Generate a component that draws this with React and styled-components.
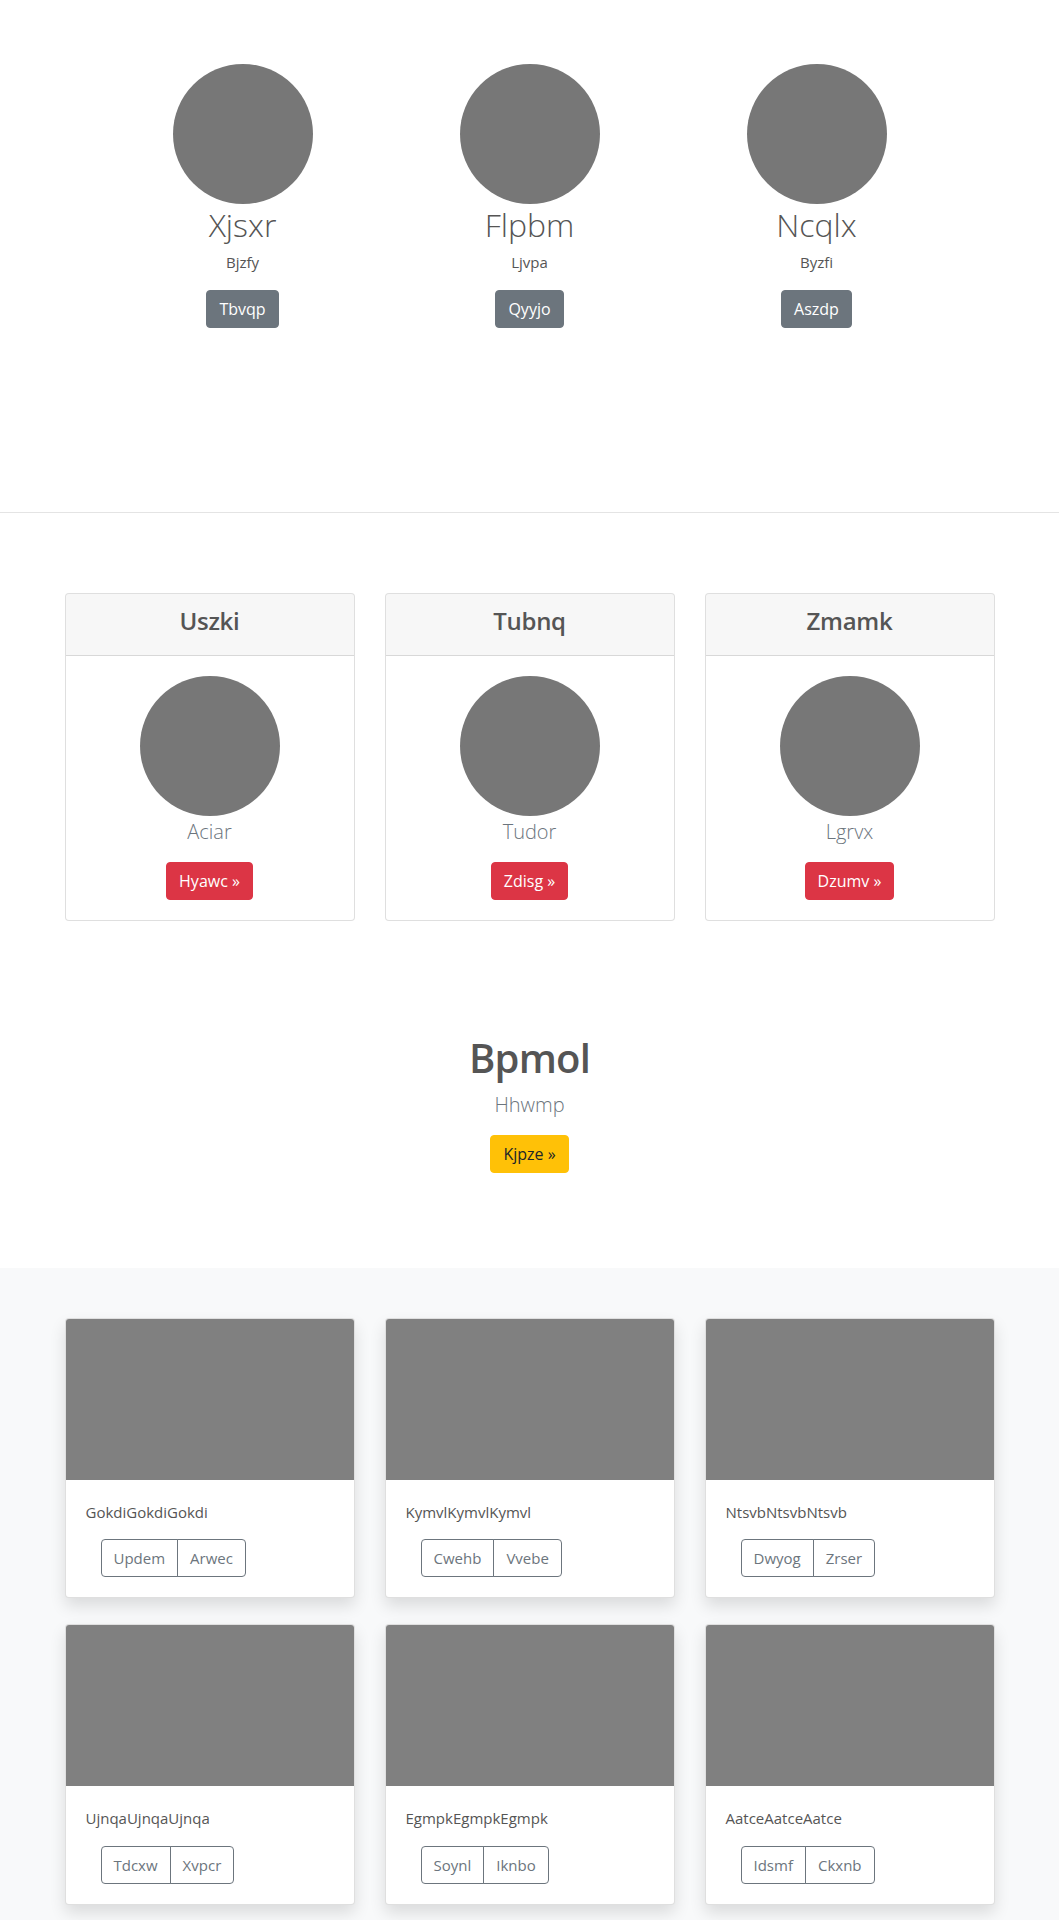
import React from "react";
import styled, { createGlobalStyle, css } from "styled-components";

const GlobalStyle = createGlobalStyle`
  *, *::before, *::after { box-sizing: border-box; }
  body {
    margin: 0;
    font-family: "Open Sans", "Noto Sans", sans-serif;
    color: #555;
    background: #fff;
  }
`;

const Page = styled.div`
  width: 100%;
`;

const Container = styled.div`
  max-width: 960px;
  margin: 0 auto;
  padding: 0 15px;
`;

/* ---------- Hero profiles ---------- */
const HeroSection = styled.section`
  padding: 64px 0 184px;
`;

const ProfileRow = styled.div`
  display: grid;
  grid-template-columns: repeat(3, 287px);
  justify-content: center;
`;

const ProfileCol = styled.div`
  display: flex;
  flex-direction: column;
  align-items: center;
  text-align: center;
`;

const Avatar = styled.div`
  width: 140px;
  height: 140px;
  border-radius: 50%;
  background: #777;
  flex-shrink: 0;
`;

const ProfileName = styled.h3`
  margin: 2px 0 0;
  font-size: 32px;
  font-weight: 300;
  line-height: 1.2;
  color: #555;
`;

const ProfileRole = styled.p`
  margin: 7px 0 16px;
  font-size: 15px;
  line-height: 1.5;
  color: #555;
`;

const variants = {
  secondary: css`
    background: #6c757d;
    border-color: #6c757d;
    color: #fff;
  `,
  danger: css`
    background: #dc3545;
    border-color: #dc3545;
    color: #fff;
  `,
  warning: css`
    background: #ffc107;
    border-color: #ffc107;
    color: #212529;
  `,
  outline: css`
    background: transparent;
    border-color: #6c757d;
    color: #6c757d;
    font-size: 15px;
  `,
};

const Button = styled.button`
  display: inline-block;
  font-family: inherit;
  font-size: 16px;
  font-weight: 400;
  line-height: 24px;
  padding: 6px 12px;
  border: 1px solid transparent;
  border-radius: 4px;
  cursor: pointer;
  ${(p) => variants[p.$variant || "secondary"]}
`;

/* ---------- Pricing style cards ---------- */
const FeatureSection = styled.section`
  border-top: 1px solid #e4e4e4;
  padding: 80px 0 48px;
`;

const CardGrid = styled.div`
  display: grid;
  grid-template-columns: repeat(3, 1fr);
  column-gap: 30px;
  row-gap: ${(p) => p.$rowGap || 0}px;
`;

const BorderCard = styled.div`
  background: #fff;
  border: 1px solid rgba(0, 0, 0, 0.125);
  border-radius: 4px;
  text-align: center;
  overflow: hidden;
`;

const CardHeader = styled.div`
  background: rgba(0, 0, 0, 0.03);
  border-bottom: 1px solid rgba(0, 0, 0, 0.125);
  padding: 12px 20px;
`;

const CardTitle = styled.h4`
  margin: 1px 0 7px;
  font-size: 24px;
  font-weight: 600;
  line-height: 1.2;
  color: #555;
  letter-spacing: -0.3px;
`;

const CardBody = styled.div`
  padding: 20px;
  display: flex;
  flex-direction: column;
  align-items: ${(p) => (p.$left ? "flex-start" : "center")};
`;

const Lead = styled.p`
  margin: ${(p) => p.$margin || "1px 0 15px"};
  font-size: 20px;
  font-weight: 300;
  line-height: 30px;
  color: #6c757d;
`;

/* ---------- Call to action ---------- */
const CtaSection = styled.section`
  padding: 65px 0 95px;
  display: flex;
  flex-direction: column;
  align-items: center;
  text-align: center;
`;

const CtaTitle = styled.h2`
  margin: 0;
  font-size: 40px;
  font-weight: 600;
  line-height: 48px;
  letter-spacing: -0.8px;
  color: #555;
`;

/* ---------- Album ---------- */
const AlbumSection = styled.section`
  background: #f8f9fa;
  padding: 50px 0 48px;
`;

const AlbumCard = styled.div`
  background: #fff;
  border: 1px solid rgba(0, 0, 0, 0.125);
  border-radius: 4px;
  overflow: hidden;
  box-shadow: 0 8px 16px rgba(0, 0, 0, 0.12);
`;

const Thumb = styled.div`
  height: 161px;
  background: #808080;
`;

const AlbumText = styled.p`
  margin: 1px 0 16px;
  font-size: 15px;
  line-height: 1.5;
  color: #555;
`;

const BtnGroup = styled.div`
  display: inline-flex;
  margin-left: 15px;
  & > button:first-child {
    border-top-right-radius: 0;
    border-bottom-right-radius: 0;
  }
  & > button:last-child {
    border-top-left-radius: 0;
    border-bottom-left-radius: 0;
    margin-left: -1px;
  }
`;

const profiles = [
  { name: "Xjsxr", role: "Bjzfy", action: "Tbvqp" },
  { name: "Flpbm", role: "Ljvpa", action: "Qyyjo" },
  { name: "Ncqlx", role: "Byzfi", action: "Aszdp" },
];

const plans = [
  { title: "Uszki", lead: "Aciar", action: "Hyawc" },
  { title: "Tubnq", lead: "Tudor", action: "Zdisg" },
  { title: "Zmamk", lead: "Lgrvx", action: "Dzumv" },
];

const albums = [
  { text: "GokdiGokdiGokdi", a: "Updem", b: "Arwec" },
  { text: "KymvlKymvlKymvl", a: "Cwehb", b: "Vvebe" },
  { text: "NtsvbNtsvbNtsvb", a: "Dwyog", b: "Zrser" },
  { text: "UjnqaUjnqaUjnqa", a: "Tdcxw", b: "Xvpcr" },
  { text: "EgmpkEgmpkEgmpk", a: "Soynl", b: "Iknbo" },
  { text: "AatceAatceAatce", a: "Idsmf", b: "Ckxnb" },
];

export default function App() {
  return (
    <Page>
      <GlobalStyle />
      <HeroSection>
        <ProfileRow>
          {profiles.map((p) => (
            <ProfileCol key={p.name}>
              <Avatar />
              <ProfileName>{p.name}</ProfileName>
              <ProfileRole>{p.role}</ProfileRole>
              <Button $variant="secondary">{p.action}</Button>
            </ProfileCol>
          ))}
        </ProfileRow>
      </HeroSection>

      <FeatureSection>
        <Container>
          <CardGrid>
            {plans.map((p) => (
              <BorderCard key={p.title}>
                <CardHeader>
                  <CardTitle>{p.title}</CardTitle>
                </CardHeader>
                <CardBody>
                  <Avatar />
                  <Lead>{p.lead}</Lead>
                  <Button $variant="danger">{p.action} »</Button>
                </CardBody>
              </BorderCard>
            ))}
          </CardGrid>
        </Container>
      </FeatureSection>

      <CtaSection>
        <CtaTitle>Bpmol</CtaTitle>
        <Lead $margin="8px 0 15px">Hhwmp</Lead>
        <Button $variant="warning">Kjpze »</Button>
      </CtaSection>

      <AlbumSection>
        <Container>
          <CardGrid $rowGap={26}>
            {albums.map((a) => (
              <AlbumCard key={a.text}>
                <Thumb />
                <CardBody $left>
                  <AlbumText>{a.text}</AlbumText>
                  <BtnGroup>
                    <Button $variant="outline">{a.a}</Button>
                    <Button $variant="outline">{a.b}</Button>
                  </BtnGroup>
                </CardBody>
              </AlbumCard>
            ))}
          </CardGrid>
        </Container>
      </AlbumSection>
    </Page>
  );
}
